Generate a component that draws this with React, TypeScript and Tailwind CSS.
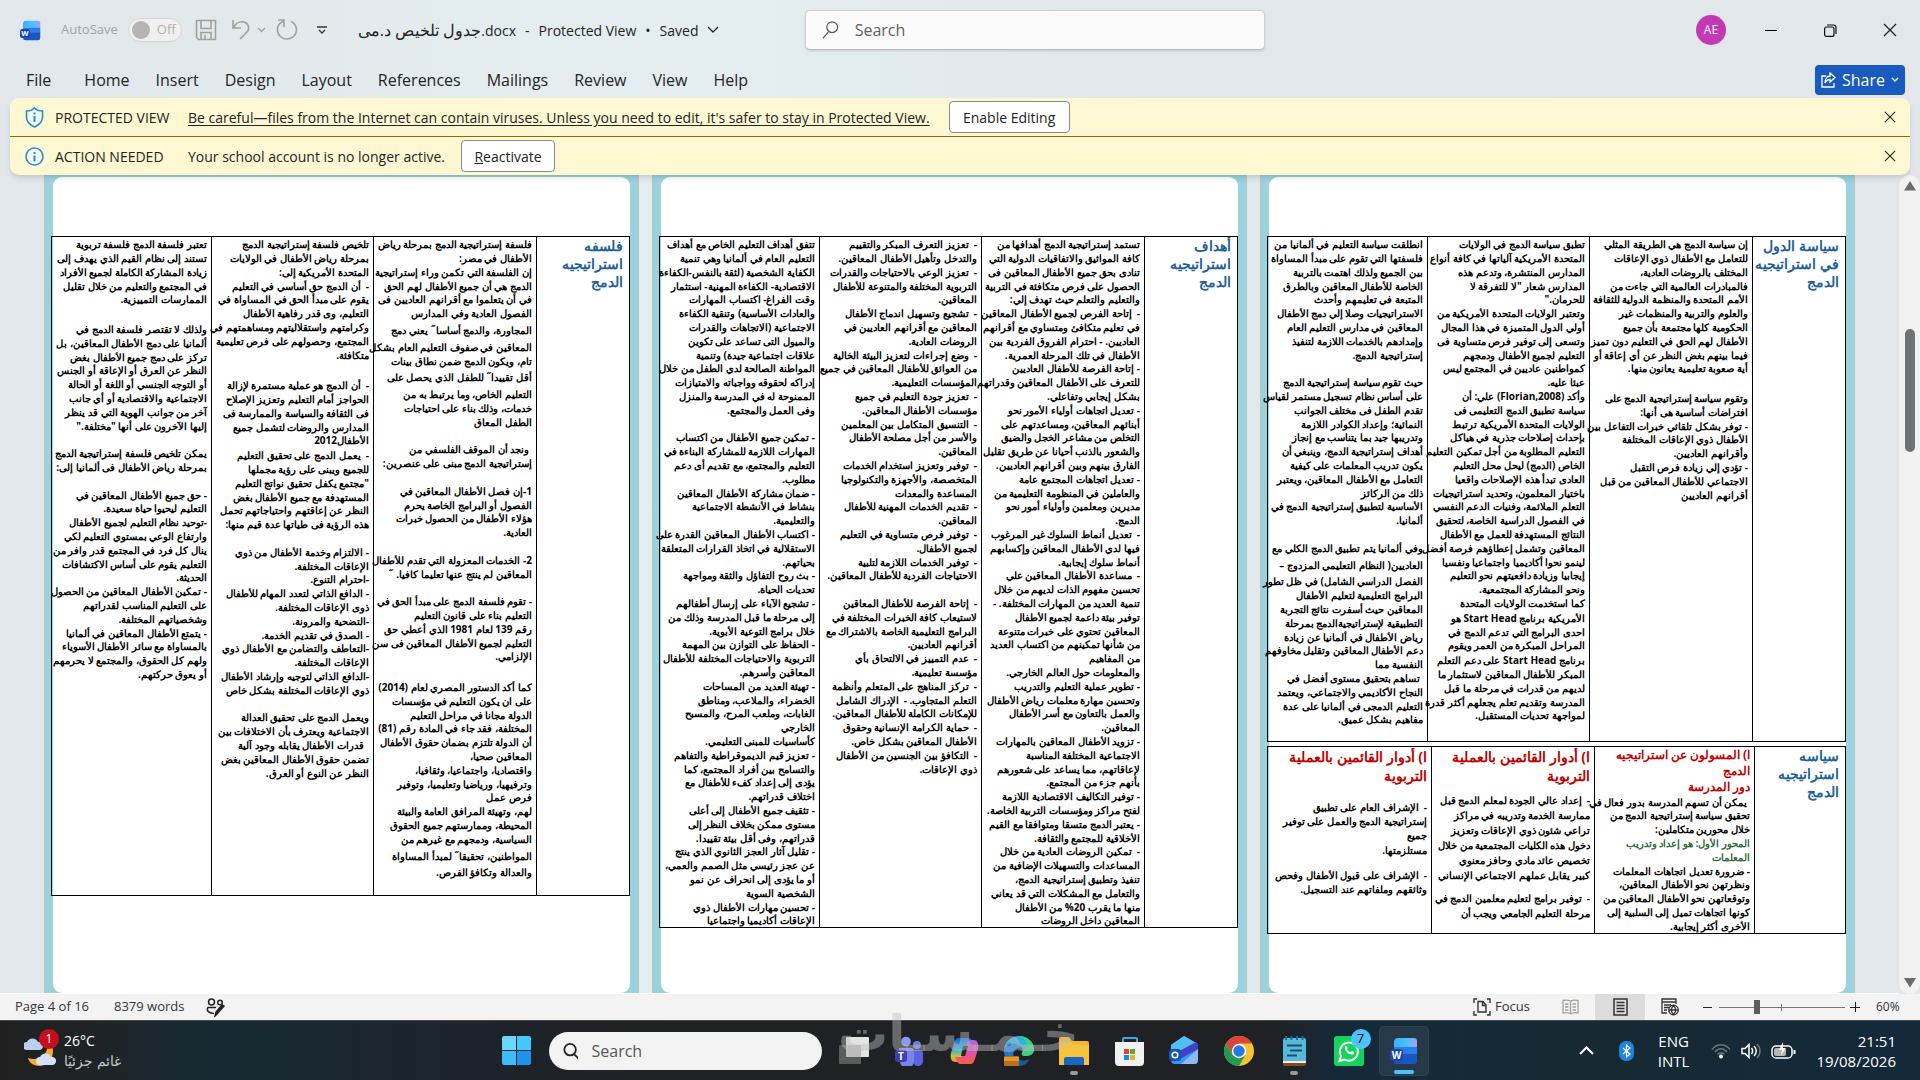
import React from "react";

type Line = string | [string, string];

const TALL = "pt-[3px]";
const RED = "text-[14px] leading-[19px]! text-[#c00000]";
const RED_SM = "text-[12px] leading-[16px]! text-[#c00000]";
const GREEN = "text-[#2f6b3c]";
const WIDE = "leading-[15px]!";
const GAP = "h-[8px]";

const philosophyHead = ["فلسفه", "استراتيجيه", "الدمج"];
const philosophyEgypt: Line[] = [
  "فلسفة إستراتيجية الدمج بمرحلة رياض",
  "الأطفال في مصر:",
  "إن الفلسفة التي تكمن وراء إستراتيجية",
  "الدمج هي أن جميع الأطفال لهم الحق",
  "في أن يتعلموا مع أقرانهم العاديين فى",
  "الفصول العادية وفي المدارس",
  ["المجاورة، والدمج أساسا˝ يعني دمج", TALL],
  ["المعاقين في صفوف التعليم العام بشكل", TALL],
  "تام، ويكون الدمج ضمن نطاق بينات",
  ["أقل تقييدا˝ للطفل الذي يحصل على", TALL],
  ["التعليم الخاص، وما يرتبط به من", TALL],
  "خدمات، وذلك بناء على احتياجات",
  "الطفل المعاق",
  "",
  "\u00a0ونجد أن الموقف الفلسفي من",
  "إستراتيجية الدمج مبنى على عنصرين:",
  "",
  "1-إن فصل الأطفال المعاقين في",
  "الفصول أو البرامج الخاصة يحرم",
  "هؤلاء الأطفال من الحصول خبرات",
  "العادية.",
  "",
  "2- الخدمات المعزولة التي تقدم للأطفال",
  "المعاقين لم ينتج عنها تعليما كافيا. ˝",
  "",
  "- تقوم فلسفة الدمج على مبدأ الحق في",
  "التعليم بناء على قانون التعليم",
  "رقم 139 لعام 1981 الذي أعطي حق",
  "التعليم لجميع الأطفال المعاقين فى سن",
  "الإلزامي.",
  "",
  ["كما أكد الدستور المصري لعام (2014)", TALL],
  "على ان يكون التعليم في مؤسسات",
  "الدولة مجانا في مراحل التعليم",
  "المختلفة، فقد جاء في المادة رقم (81)",
  "أن الدولة تلتزم بضمان حقوق الأطفال",
  "المعاقين صحيا،",
  "واقتصاديا، واجتماعيا، وثقافيا،",
  "وترفيهيا، ورياضيا وتعليميا، وتوفير",
  "فرص عمل",
  "لهم، وتهيئة المرافق العامة والبيئة",
  "المحيطة، وممارستهم جميع الحقوق",
  "السياسية، ودمجهم مع غيرهم من",
  ["المواطنين، تحقيقا˝ لمبدأ المساواة", TALL],
  ["والعدالة وتكافؤ الفرص.", TALL],
];
const philosophyUsa: Line[] = [
  "تلخيص فلسفة إستراتيجية الدمج",
  "بمرحلة رياض الأطفال في الولايات",
  "المتحدة الأمريكية إلى:",
  "-\u00a0 أن الدمج حق أساسي في التعليم",
  "يقوم على مبدأ الحق في المساواة في",
  "التعليم، وى قدر رفاهية الأطفال",
  "وكرامتهم واستقلاليتهم ومساهمتهم في",
  "المجتمع، وحصولهم على فرص تعليمية",
  "متكافئة.",
  "",
  ["-\u00a0 أن الدمج هو عملية مستمرة لإزالة", TALL],
  "الحواجز أمام التعليم وتعزيز الإصلاح",
  "فى الثقافة والسياسة والممارسة فى",
  "المدارس والروضات لتشمل جميع",
  "الأطفال2012",
  ["-\u00a0 يعمل الدمج على تحقيق التعليم", "pt-[1px]"],
  "للجميع ويبنى على رؤية مجملها",
  "\"مجتمع يكفل تحقيق نواتج التعليم",
  "المستهدفة مع جميع الأطفال بغض",
  "النظر عن إعاقتهم واحتياجاتهم تحمل",
  "هذه الرؤية فى طياتها عدة قيم منها:",
  "",
  "- الالتزام وخدمة الأطفال من ذوي",
  "الإعاقات المختلفة.",
  "-احترام التنوع.",
  "- الدافع الذاتي لتعدد المهام للأطفال",
  "ذوى الإعاقات المختلفة.",
  "-التضحية والمرونة.",
  "- الصدق في تقديم الخدمة.",
  "-التعاطف والتضامن مع الأطفال ذوي",
  "الإعاقات المختلفة.",
  "-الدافع الذاتي لتوجيه وإرشاد الأطفال",
  "ذوي الإعاقات المختلفة بشكل خاص",
  "",
  "ويعمل الدمج على تحقيق العدالة",
  "الاجتماعية ويعترف بأن الاختلافات بين",
  "\u00a0\u00a0قدرات الأطفال يقابله وجود آلية",
  "تضمن حقوق الأطفال المعاقين بغض",
  "النظر عن النوع أو العرق.",
];
const philosophyGermany: Line[] = [
  "تعتبر فلسفة الدمج فلسفة تربوية",
  "تستند إلى نظام القيم الذي يهدف إلى",
  "زيادة المشاركة الكاملة لجميع الأفراد",
  "في المجتمع والتعليم من خلال تقليل",
  "الممارسات التمييزية.",
  "",
  ["ولذلك لا تقتصر فلسفة الدمج في", "pt-[2px]"],
  "ألمانيا على دمج الأطفال المعاقين، بل",
  "تركز على دمج جميع الأطفال بغض",
  "النظر عن العرق أو الإعاقة أو الجنس",
  "أو التوجه الجنسي أو اللغة أو الحالة",
  "الاجتماعية والاقتصادية أو أي جانب",
  "آخر من جوانب الهوية التي قد ينظر",
  "إليها الآخرون على أنها \"مختلفة.\"",
  "",
  "يمكن تلخيص فلسفة إستراتيجية الدمج",
  "بمرحلة رياض الأطفال فى ألمانيا إلى:",
  "",
  "- حق جميع الأطفال المعاقين في",
  "التعليم ليحيوا حياة سعيدة.",
  "-توحيد نظام التعليم لجميع الأطفال",
  "وارتفاع الوعي بمستوي التعليم لكي",
  "ينال كل فرد في المجتمع قدر وافر من",
  "التعليم يقوم على أساس الاكتشافات",
  "الحديثة.",
  "- تمكين الأطفال المعاقين من الحصول",
  "على التعليم المناسب لقدراتهم",
  "وشخصياتهم المختلفة.",
  "- يتمتع الأطفال المعاقين في ألمانيا",
  "بالمساواة مع سائر الأطفال الأسوياء",
  "ولهم كل الحقوق، والمجتمع لا يحرمهم",
  "أو يعوق حركتهم.",
];

const goalsHead = ["أهداف", "استراتيجيه", "الدمج"];
const goalsEgypt: Line[] = [
  "تستمد إستراتيجية الدمج أهدافها من",
  "كافة المواثيق والاتفاقيات الدولية التي",
  "تنادى بحق جميع الأطفال المعاقين فى",
  "الحصول على فرص متكافئة في التربية",
  "والتعليم والتعلم حيث تهدف إلي:",
  "-\u00a0 إتاحة الفرص لجميع الأطفال المعاقين",
  "في تعليم متكافئ ومتساوي مع أقرانهم",
  "العاديين. - احترام الفروق الفردية بين",
  "الأطفال في تلك المرحلة العمرية.",
  "- إتاحة الفرصة للأطفال العاديين",
  "للتعرف على الأطفال المعاقين وقدراتهم",
  "بشكل إيجابي وتفاعلي.",
  "- تعديل اتجاهات أولياء الأمور نحو",
  "أبنائهم المعاقين، ومساعدتهم على",
  "التخلص من مشاعر الخجل والضيق",
  "والشعور بالذنب أحيانا عن طريق تقليل",
  "الفارق بينهم وبين أقرانهم العاديين.",
  "- تعديل اتجاهات المجتمع عامة",
  "والعاملين في المنظومة التعليمية من",
  "مديرين ومعلمين وأولياء أمور نحو",
  "الدمج.",
  "-\u00a0 تعديل أنماط السلوك غير المرغوب",
  "فيها لدي الأطفال المعاقين وإكسابهم",
  "أنماط سلوك إيجابية.",
  "-\u00a0 مساعدة الأطفال المعاقين علي",
  "تحسين مفهوم الذات لديهم من خلال",
  "تنمية العديد من المهارات المختلفة. -",
  "توفير بيئة داعمة لجميع الأطفال",
  "المعاقين تحتوي على خبرات متنوعة",
  "من شأنها تمكينهم من اكتساب العديد",
  "من المفاهيم",
  "والمعلومات حول العالم الخارجي.",
  "- تطوير عملية التعليم والتدريب",
  "وتحسين مهارة معلمات رياض الأطفال",
  "والعمل بالتعاون مع أسر الأطفال",
  "المعاقين.",
  "- تزويد الأطفال المعاقين بالمهارات",
  "الاجتماعية المختلفة المناسبة",
  "لإعاقاتهم، مما يساعد على شعورهم",
  "بأنهم جزء من المجتمع.",
  "- توفير التكاليف الاقتصادية اللازمة",
  "لفتح مراكز ومؤسسات التربية الخاصة.",
  "- يعتبر الدمج متسقا ومتوافقا مع القيم",
  "الأخلاقية للمجتمع والثقافة.",
  "-\u00a0 تمكين الروضات العادية من خلال",
  "المساعدات والتسهيلات الإضافية من",
  "تنفيذ وتطبيق إستراتيجية الدمج،",
  "والتعامل مع المشكلات التي قد يعاني",
  "منها ما يقرب 20% من الأطفال",
  "المعاقين داخل الروضات",
];
const goalsUsa: Line[] = [
  "-\u00a0 تعزيز التعرف المبكر والتقييم",
  "والتدخل وتأهيل الأطفال المعاقين.",
  "-\u00a0 تعزيز الوعي بالاحتياجات والقدرات",
  "التربوية المختلفة والمتنوعة للأطفال",
  "المعاقين.",
  "-\u00a0 تشجيع وتسهيل اندماج الأطفال",
  "المعاقين مع أقرانهم العاديين في",
  "الروضات العادية.",
  "-\u00a0 وضع إجراءات لتعزيز البيئة الخالية",
  "من العوائق للأطفال المعاقين في جميع",
  "المؤسسات التعليمية.",
  "-\u00a0 تعزيز جودة التعليم في جميع",
  "مؤسسات الأطفال المعاقين.",
  "-\u00a0 التنسيق المتكامل بين المعلمين",
  "والأسر من أجل مصلحة الأطفال",
  "المعاقين.",
  "-\u00a0 توفير وتعزيز استخدام الخدمات",
  "المتخصصة، والأجهزة والتكنولوجيا",
  "المساعدة والمعدات",
  "-\u00a0 تقديم الخدمات المهنية للأطفال",
  "المعاقين.",
  "-\u00a0 توفير فرص متساوية في التعليم",
  "لجميع الأطفال.",
  "-\u00a0 توفير الخدمات اللازمة لتلبية",
  "الاحتياجات الفردية للأطفال المعاقين.",
  "",
  "-\u00a0 إتاحة الفرصة للأطفال المعاقين",
  "لاستيعاب كافة الخبرات المختلفة في",
  "البرامج التعليمية الخاصة بالاشتراك مع",
  "أقرانهم العاديين.",
  "-\u00a0 عدم التمييز في الالتحاق بأي",
  "مؤسسة تعليمية.",
  "-\u00a0 تركز المناهج على المتعلم وأنظمة",
  "التعلم المتجاوب. -\u00a0 الإدراك الشامل",
  "للإمكانات الكاملة للأطفال المعاقين.",
  "-\u00a0 حماية الكرامة الإنسانية وحقوق",
  "الأطفال المعاقين بشكل خاص.",
  "-\u00a0 التكافؤ بين الجنسين من الأطفال",
  "ذوي الإعاقات.",
];
const goalsGermany: Line[] = [
  "تتفق أهداف التعليم الخاص مع أهداف",
  "التعليم العام في ألمانيا وهي تنمية",
  "الكفاية الشخصية (لثقة بالنفس-الكفاءة",
  "الاقتصادية- الكفاءة المهنية- استثمار",
  "وقت الفراغ- اكتساب المهارات",
  "والعادات الأساسية) وتنقية الكفاءة",
  "الاجتماعية (الاتجاهات والقدرات",
  "والميول التى تساعد على تكوين",
  "علاقات اجتماعية جيدة) وتنمية",
  "المواطنة الصالحة لدي الطفل من خلال",
  "إدراكه لحقوقه وواجباته والامتيازات",
  "الممنوحة له في المدرسة والمنزل",
  "وفى العمل والمجتمع.",
  "",
  "- تمكين جميع الأطفال من اكتساب",
  "المهارات اللازمة للمشاركة البناءة في",
  "التعليم والمجتمع، مع تقديم أى دعم",
  "مطلوب.",
  "- ضمان مشاركة الأطفال المعاقين",
  "بنشاط في الأنشطة الاجتماعية",
  "والتعليمية.",
  "- اكتساب الأطفال المعاقين القدرة على",
  "الاستقلالية في اتخاذ القرارات المتعلقة",
  "بحياتهم.",
  "- بث روح التفاؤل والثقة ومواجهة",
  "تحديات الحياة.",
  "- تشجيع الآباء على إرسال أطفالهم",
  "إلى مرحلة ما قبل المدرسة وذلك من",
  "خلال برامج التوعية الأبوية.",
  "- الحفاظ على التوازن بين المهمة",
  "التربوية والاحتياجات المختلفة للأطفال",
  "المعاقين وأسرهم.",
  "- تهيئة العديد من المساحات",
  "الخضراء، والملاعب، ومناطق",
  "الغابات، وملعب المرح، والمسبح",
  "الخارجي",
  "كأساسيات للمبنى التعليمي.",
  "- تعزيز قيم الديموقراطية والتفاهم",
  "والتسامح بين أفراد المجتمع، كما",
  "يؤدى إلى إعداد كفء للأطفال مع",
  "اختلاف قدراتهم.",
  "- تثقيف جميع الأطفال إلى أعلى",
  "مستوى ممكن بخلاف النظر إلى",
  "قدراتهم، وفى أقل بيئة تقييدا.",
  "- تقليل آثار العجز الثانوي الذي ينتج",
  "عن عجز رئيسي مثل الصمم والعمي،",
  "أو ما يؤدى إلى انحراف عن نمو",
  "الشخصية السوية",
  "- تحسين مهارات الأطفال ذوي",
  "الإعاقات أكاديميا واجتماعيا",
];

const policyHead = ["سياسة الدول", "في استراتيجيه", "الدمج"];
const policyEgypt: Line[] = [
  "إن سياسة الدمج هي الطريقة المثلي",
  "للتعامل مع الأطفال ذوي الإعاقات",
  "المختلف بالروضات العادية،",
  "فالمبادرات العالمية التي جاءت من",
  "الأمم المتحدة والمنظمة الدولية للثقافة",
  "والعلوم والتربية والمنظمات غير",
  "الحكومية كلها مجتمعة بأن جميع",
  "الأطفال لهم الحق في التعليم دون تميز",
  "فيما بينهم بغض النظر عن أي إعاقة أو",
  "أية صعوبة تعليمية يعانون منها.",
  "",
  ["وتقوم سياسة إستراتيجية الدمج على", "pt-[2px]"],
  "افتراضات أساسية هى أنها:",
  "- توفر بشكل تلقائي خبرات التفاعل بين",
  "الأطفال ذوي الإعاقات المختلفة",
  "وأقرانهم العاديين.",
  "- تؤدي إلي زيادة فرص التقبل",
  "الاجتماعي للأطفال المعاقين من قبل",
  "أقرانهم العاديين",
];
const policyUsa: Line[] = [
  "تطبق سياسة الدمج في الولايات",
  "المتحدة الأمريكية آلياتها في كافة أنواع",
  "المدارس المنتشرة، وتدعم هذه",
  "المدارس شعار \"لا للتفرقة لا",
  "للحرمان.\"",
  "وتعتبر الولايات المتحدة الأمريكية من",
  "أولي الدول المتميزة في هذا المجال",
  "وتسعى إلى توفير فرص متساوية فى",
  "التعليم لجميع الأطفال ودمجهم",
  "كمواطنين عاديين في المجتمع ليس",
  "عبئا عليه.",
  "وأكد (Florian,2008) علي: أن",
  "سياسة تطبيق الدمج التعليمى فى",
  "الولايات المتحدة الأمريكية ترتبط",
  "بإحداث إصلاحات جذرية في هياكل",
  "التعليم المطلوبة من أجل تمكين التعليم",
  "الخاص (الدمج) ليحل محل التعليم",
  "العادى تبدأ هذه الإصلاحات واقعيا",
  "باختيار المعلمون، وتحديد استراتيجيات",
  "التعلم الملائمة، وفنيات الدعم النفسي",
  "في الفصول الدراسية الخاصة، لتحقيق",
  "النتائج المستهدفة للعمل مع الأطفال",
  "المعاقين وتشمل إعطاؤهم فرصة أفضل",
  "لينمو نحوا أكاديميا واجتماعيا ونفسيا",
  "إيجابيا وزيادة دافعيتهم نحو التعليم",
  "ونحو المشاركة المجتمعية.",
  "كما استخدمت الولايات المتحدة",
  ["الأمريكية برنامج Start Head هو", "pt-[1px]"],
  "احدى البرامج التي تدعم الدمج في",
  "المراحل المبكرة من العمر ويقوم",
  ["برنامج Start Head على دعم التعلم", "pt-[1px]"],
  "المبكر للأطفال المعاقين لاستثمار ما",
  "لديهم من قدرات في مرحلة ما قبل",
  "المدرسة وتقديم تعلم يجعلهم أكثر قدرة",
  "لمواجهة تحديات المستقبل.",
];
const policyGermany: Line[] = [
  "انطلقت سياسة التعليم في ألمانيا من",
  "فلسفتها التي تقوم على مبدأ المساواة",
  "بين الجميع ولذلك اهتمت بالتربية",
  "الخاصة للأطفال المعاقين وبالطرق",
  "المتبعة في تعليمهم وأحدث",
  "الاستراتيجيات وصلا إلي دمج الأطفال",
  "المعاقين في مدارس التعليم العام",
  "وإمدادهم بالخدمات اللازمة لتنفيذ",
  "إستراتيجية الدمج.",
  "",
  "حيث تقوم سياسة إستراتيجية الدمج",
  "على أساس نظام تسجيل مستمر لقياس",
  "تقدم الطفل فى مختلف الجوانب",
  "النمائية؛ وإعداد الكوادر اللازمة",
  "وتدريبها جيد بما يتناسب مع إنجاز",
  "أهداف إستراتيجية الدمج، وينبغي أن",
  "يكون تدريب المعلمات على كيفية",
  "التعامل مع الأطفال المعاقين، ويعتبر",
  "ذلك من الركائز",
  "الأساسية لتطبيق إستراتيجية الدمج في",
  "ألمانيا.",
  "",
  "وفي ألمانيا يتم تطبيق الدمج الكلي مع",
  ["العاديين( النظام التعليمي المزدوج –", TALL],
  ["الفصل الدراسي الشامل) في ظل تطور", TALL],
  "البرامج التعليمية لتعليم الأطفال",
  "المعاقين حيث أسفرت نتائج التجربة",
  "التطبيقية لإستراتيجيةالدمج بمرحلة",
  "رياض الأطفال في ألمانيا عن زيادة",
  "دعم الأطفال المعاقين وتقليل مخاوفهم",
  "النفسية مما",
  "\u00a0تساهم بتحقيق مستوى أفضل في",
  "النجاح الأكاديمي والاجتماعي، ويعتمد",
  "التعليم الدمجى في ألمانيا على عدة",
  "مفاهيم بشكل عميق.",
];

const rolesHead = ["سياسه", "استراتيجيه", "الدمج"];
const rolesEgypt: Line[] = [
  ["ا) المسولون عن استراتيجيه", RED_SM],
  ["الدمج", RED_SM],
  ["دور المدرسة", RED_SM],
  "\u00a0يمكن أن تسهم المدرسة بدور فعال في",
  "تحقيق سياسة إستراتيجية الدمج من",
  "خلال محورين متكاملين:",
  ["المحور الأول: هو إعداد وتدريب", GREEN],
  ["المعلمات", GREEN],
  "- ضرورة تعديل اتجاهات المعلمات",
  "ونظرتهن نحو الأطفال المعاقين،",
  "وتوقعاتهن نحو الأطفال المعاقين من",
  "كونها اتجاهات تميل إلى السلبية إلى",
  "الأخرى أكثر إيجابية.",
];
const rolesUsa: Line[] = [
  ["ا) أدوار القائمين بالعملية", RED],
  ["التربوية", RED],
  ["", GAP],
  ["-\u00a0 إعداد عالي الجودة لمعلم الدمج قبل", WIDE],
  ["ممارسة الخدمة وتدريبه في مراكز", WIDE],
  ["تراعي شئون ذوي الإعاقات وتعزيز", WIDE],
  ["دخول هذه الكليات المجتمعية من خلال", WIDE],
  ["تخصيص عائد مادي وحافز معنوي", WIDE],
  ["كبير يقابل عملهم الاجتماعي الإنساني", WIDE],
  ["", GAP],
  ["-\u00a0 توفير برامج لتعليم معلمين الدمج في", WIDE],
  ["مرحلة التعليم الجامعي ويجب أن", WIDE],
];
const rolesGermany: Line[] = [
  ["ا) أدوار القائمين بالعملية", RED],
  ["التربوية", RED],
  ["", WIDE],
  ["-\u00a0 الإشراف العام على تطبيق", WIDE],
  "إستراتيجية الدمج والعمل على توفير",
  ["جميع", WIDE],
  "مستلزمتها.",
  ["", GAP],
  ["", "h-[4px]"],
  "-\u00a0 الإشراف على قبول الأطفال وفحص",
  "وثائقهم وملفاتهم عند التسجيل.",
];

function Cell({ lines }: { lines: Line[] }) {
  return (
    <td className="border border-black p-0 pr-[4px] align-top">
      <div className="text-[10px] font-bold text-black [&>p]:leading-[14px] [&>p:nth-child(5n)]:leading-[13px]">
        {lines.map((l, i) => {
          const [text, cls] = typeof l === "string" ? [l, ""] : l;
          return (
            <p key={i} className={"whitespace-nowrap " + cls}>
              {text || (cls.startsWith("h-") ? "" : "\u00a0")}
            </p>
          );
        })}
      </div>
    </td>
  );
}

function Head({ lines }: { lines: string[] }) {
  return (
    <th scope="row" className="border border-black p-0 pr-[6px] text-right align-top text-[14px] leading-[18px] font-bold whitespace-nowrap text-[#1f6299]">
      {lines.map((l) => (
        <div key={l}>{l}</div>
      ))}
    </th>
  );
}

function Grid({ head, cells, widths, height }: { head: string[]; cells: Line[][]; widths: string[]; height: string }) {
  return (
    <table dir="rtl" className={"w-[578px] table-fixed border-collapse " + height}>
      <colgroup>
        {widths.map((w, i) => (
          <col key={i} className={w} />
        ))}
      </colgroup>
      <tbody>
        <tr>
          <Head lines={head} />
          {cells.map((c, i) => (
            <Cell key={i} lines={c} />
          ))}
        </tr>
      </tbody>
    </table>
  );
}

function Page({ children }: { children: React.ReactNode }) {
  return (
    <article className="w-[595px] shrink-0 border-x border-[#b9c4c8] bg-[#9bd3dd] px-[8px] pt-[2px]">
      <div dir="rtl" className="h-full rounded-[9px] bg-white pt-[59px]">
        {children}
      </div>
    </article>
  );
}

const mainCols = ["w-[93px]", "w-[163px]", "w-[162px]", "w-[160px]"];
const roleCols = ["w-[91px]", "w-[160px]", "w-[163px]", "w-[164px]"];

function CloseX({ size = 14 }: { size?: number }) {
  return (
    <svg width={size} height={size} viewBox="0 0 14 14" stroke="#262626" strokeWidth="1.3" fill="none" aria-hidden>
      <path d="M1 1l12 12M13 1L1 13" />
    </svg>
  );
}

function WordLogo({ size }: { size: number }) {
  return (
    <svg width={size} height={size} viewBox="0 0 28 28" aria-hidden>
      <defs>
        <linearGradient id="wt" x1="0" x2="1">
          <stop offset="0" stopColor="#39b0f8" />
          <stop offset="0.6" stopColor="#4cc2ff" />
          <stop offset="1" stopColor="#a79cf0" />
        </linearGradient>
      </defs>
      <path d="M8 1h16a3 3 0 0 1 3 3v6H4V5a4 4 0 0 1 4-4z" fill="url(#wt)" />
      <path d="M4 10h23v8H4z" fill="#2b7de9" />
      <path d="M4 17h23v7a3 3 0 0 1-3 3H7a3 3 0 0 1-3-3z" fill="#1a56c4" />
      <rect x="0" y="12" width="13" height="12" rx="3" fill="#1747b0" />
      <text x="6.5" y="21.5" textAnchor="middle" fontSize="10" fontWeight="700" fill="#fff" fontFamily="Open Sans">W</text>
    </svg>
  );
}

function TitleBar() {
  return (
    <header className="flex h-[60px] items-center">
      <div className="flex flex-1 items-center pl-5">
        <WordLogo size={21} />
        <label className="ml-[20px] flex items-center gap-[10px] text-[13px] text-[#a0a5a8]">
          AutoSave
          <button role="switch" aria-checked="false" aria-label="AutoSave" className="flex h-[24px] w-[54px] items-center gap-[7px] rounded-full border border-[#d6d6d6] bg-[#f0f0f0] pl-[3px] text-[#b0b0b0]">
            <span className="size-[18px] rounded-full bg-[#b4b4b4]" />
            Off
          </button>
        </label>
        <button aria-label="Save" className="ml-[13px]">
          <svg width="22" height="22" viewBox="0 0 22 22" fill="none" stroke="#a0a19c" strokeWidth="1.6" aria-hidden>
            <path d="M1.5 1.5h19v19h-17l-2-2zM6 1.5v8h10v-8M6 20.5v-7h10v7M10 16v4" />
          </svg>
        </button>
        <button aria-label="Undo" className="ml-[14px] flex items-center gap-1">
          <svg width="22" height="22" viewBox="0 0 22 22" fill="none" stroke="#a0a19c" strokeWidth="1.6" aria-hidden>
            <path d="M2 1v8h8M2.500 8.500C5 4 9 2 13 3c5 1.500 6 7 3 10l-7 7" />
          </svg>
          <svg width="9" height="6" viewBox="0 0 9 6" fill="none" stroke="#a0a19c" strokeWidth="1.400" aria-hidden><path d="M1 1l3.500 3.500L8 1" /></svg>
        </button>
        <button aria-label="Redo" className="ml-[10px]">
          <svg width="22" height="22" viewBox="0 0 22 22" fill="none" stroke="#a0a19c" strokeWidth="1.600" aria-hidden>
            <path d="M2 1h6v7M8 2C3 4 1 8 1.500 12c1 5 5 8 9.500 8 5 0 9.500-4 9.500-9 0-4-2-7-5.500-8.500" />
          </svg>
        </button>
        <button aria-label="Customize Quick Access Toolbar" className="ml-[19px]">
          <svg width="10" height="9" viewBox="0 0 10 9" fill="none" stroke="#333" strokeWidth="1.300" aria-hidden><path d="M0 1h10M2 4l3 3 3-3" /></svg>
        </button>
        <button className="ml-[31px] flex items-center gap-[9px] text-[14px] whitespace-nowrap text-[#242424]">
          <span><bdi className="text-[16px]">جدول تلخيص د.مى</bdi>.docx</span>
          <span>-</span>
          <span>Protected View</span>
          <span>•</span>
          <span>Saved</span>
          <svg width="12" height="8" viewBox="0 0 12 8" fill="none" stroke="#242424" strokeWidth="1.300" aria-hidden><path d="M1 1l5 5 5-5" /></svg>
        </button>
      </div>
      <label className="flex h-[40px] w-[460px] items-center gap-4 rounded-[5px] border border-[#cdd1d3] border-b-[#b8bcbe] bg-[#fafafa] pl-[16px] shadow-sm">
        <svg width="18" height="20" viewBox="0 0 18 20" fill="none" stroke="#555" strokeWidth="1.300" aria-hidden><circle cx="11" cy="7" r="5.800" /><path d="M7 12l-6 7" /></svg>
        <input aria-label="Search" placeholder="Search" className="w-full bg-transparent text-[16px] outline-none placeholder:text-[#616161]" />
      </label>
      <div className="flex w-[655px] items-center justify-end pr-[23px]">
        <button className="mr-[39px] size-[30px] rounded-full bg-[#c239b3] text-[12px] text-white">AE</button>
        <button aria-label="Minimize" className="mr-[47px]"><span className="block h-px w-[12px] bg-black" /></button>
        <button aria-label="Restore" className="mr-[46px]">
          <svg width="13" height="13" viewBox="0 0 13 13" fill="none" stroke="#111" strokeWidth="1.200" aria-hidden><rect x="0.600" y="3" width="9.400" height="9.400" rx="2" /><path d="M3 1h6.500a2.500 2.500 0 0 1 2.500 2.500V10" /></svg>
        </button>
        <button aria-label="Close"><CloseX /></button>
      </div>
    </header>
  );
}

const tabs = ["Home", "Insert", "Design", "Layout", "References", "Mailings", "Review", "View", "Help"];

function Menu() {
  return (
    <nav className="flex h-[38px] items-center pt-px pr-[15px] pl-[26px] text-[16px] text-[#242424]">
      <button className="mr-[33px]">File</button>
      <div className="flex flex-1 gap-[26px]">
        {tabs.map((t) => (
          <button key={t}>{t}</button>
        ))}
      </div>
      <button className="flex h-[30px] w-[90px] items-center gap-[6px] rounded-[4px] bg-[#185abd] pl-[6px] text-white">
        <svg width="15" height="16" viewBox="0 0 15 16" fill="none" stroke="#fff" strokeWidth="1.300" aria-hidden>
          <path d="M5 4H1v11h12v-4M9 1l5 4.500L9 10V7.500C6.500 7.500 5 8.500 4 11c0-4 2-7 5-7z" />
        </svg>
        Share
        <svg width="8" height="6" viewBox="0 0 8 6" fill="none" stroke="#fff" strokeWidth="1.400" aria-hidden><path d="M1 1l3 3 3-3" /></svg>
      </button>
    </nav>
  );
}

function InfoBars() {
  return (
    <section className="relative z-10 mr-[10px] ml-[10px] rounded-[9px] bg-[#fdf8d2] text-[14px] text-[#242424] shadow-md">
      <div className="flex h-[39px] items-center border-b border-[#8d6b00] pr-[14px] pl-[15px]">
        <svg width="19" height="21" viewBox="0 0 19 21" fill="#f3fafe" stroke="#2a8dd4" strokeWidth="1.600" aria-hidden>
          <path d="M9.500 1C7.500 3 4.500 4 1.500 4v6c0 5 3.500 8 8 10 4.500-2 8-5 8-10V4c-3 0-6-1-8-3z" /><path d="M9.500 9v6M9.500 5.500v2" strokeWidth="2" />
        </svg>
        <strong className="ml-[11px] w-[133px] font-medium">PROTECTED VIEW</strong>
        <a href="#protected" className="mr-[19px] underline underline-offset-2">
          Be careful—files from the Internet can contain viruses. Unless you need to edit, it's safer to stay in Protected View.
        </a>
        <button className="h-[32px] w-[121px] rounded-[4px] border border-[#8a8a8a] bg-white">Enable Editing</button>
        <button aria-label="Close message" className="ml-auto"><CloseX size={12} /></button>
      </div>
      <div className="flex h-[38px] items-center pr-[14px] pl-[15px]">
        <svg width="19" height="21" viewBox="0 0 19 21" fill="#f3fafe" stroke="#2a8dd4" strokeWidth="1.600" aria-hidden>
          <circle cx="9.500" cy="10.500" r="8.500" /><path d="M9.500 9.500v6M9.500 6v2" strokeWidth="2" />
        </svg>
        <strong className="ml-[11px] w-[133px] font-medium">ACTION NEEDED</strong>
        <span className="mr-[16px]">Your school account is no longer active.</span>
        <button className="h-[32px] w-[94px] rounded-[4px] border border-[#8a8a8a] bg-white"><u>R</u>eactivate</button>
        <button aria-label="Close message" className="ml-auto"><CloseX size={12} /></button>
      </div>
    </section>
  );
}

function StatusBar() {
  return (
    <footer className="flex h-[26px] shrink-0 items-center bg-[#f3f3f3] pr-[18px] pl-[15px] text-[13px] text-[#333]">
      <span className="w-[99px]">Page 4 of 16</span>
      <span className="w-[92px]">8379 words</span>
      <svg width="20" height="19" viewBox="0 0 20 19" fill="none" stroke="#222" strokeWidth="1.500" aria-hidden>
        <circle cx="5.500" cy="4" r="3" /><circle cx="14" cy="4.500" r="2.300" /><path d="M10 9.500H2c-2 3 1 6 6 6" /><path d="M18 8l-7 8-2 2 1-4 6-7z" fill="#222" />
      </svg>
      <div className="ml-auto flex items-center">
        <button className="flex items-center gap-[4px]">
          <svg width="18" height="18" viewBox="0 0 18 18" fill="none" stroke="#333" strokeWidth="1.400" aria-hidden>
            <path d="M1 5V1h3M14 1h3v4M17 13v4h-3M4 17H1v-4M5 3.500h5l3 3.500v7H5zM9.500 3.500V7.500H13" />
          </svg>
          Focus
        </button>
        <button aria-label="Read Mode" className="ml-[32px]">
          <svg width="17" height="16" viewBox="0 0 17 16" fill="none" stroke="#a3a39c" strokeWidth="1.300" aria-hidden>
            <path d="M8.500 2C6.500 1 3 1 1 1.500V14c2-.500 5.500-.500 7.500 1 2-1.500 5.500-1.500 7.500-1V1.500C14 1 10.500 1 8.500 2zV15M3 5h3.500M3 8h3.500M3 11h3.500M10.500 5H14M10.500 8H14M10.500 11H14" />
          </svg>
        </button>
        <button aria-label="Print Layout" className="ml-[16px] grid h-[26px] w-[50px] place-items-center bg-[#dcdcdc]">
          <svg width="15" height="18" viewBox="0 0 15 18" fill="none" stroke="#333" strokeWidth="1.500" aria-hidden>
            <path d="M1 1h13v16H1zM3.500 4.500h8M3.500 7.500h8M3.500 10.500h8M3.500 13.500h8" />
          </svg>
        </button>
        <button aria-label="Web Layout" className="ml-[16px]">
          <svg width="18" height="18" viewBox="0 0 18 18" fill="none" stroke="#333" strokeWidth="1.300" aria-hidden>
            <path d="M6 15H1V1h14v5M1 4h14M3 7h7M3 9.500h5M3 12h3" /><circle cx="12.500" cy="12" r="4.800" /><path d="M8 12h9M12.500 7.500c-3 3-3 6 0 9 3-3 3-6 0-9z" />
          </svg>
        </button>
        <button aria-label="Zoom out" className="ml-[24px]"><span className="block h-px w-[9px] bg-[#222]" /></button>
        <div className="relative ml-[7px] flex w-[126px] items-center">
          <span className="absolute left-[62px] h-[7px] w-px bg-[#777]" />
          <input
            type="range"
            aria-label="Zoom"
            defaultValue={29}
            className="relative h-[14px] w-full appearance-none bg-transparent [&::-webkit-slider-runnable-track]:h-px [&::-webkit-slider-runnable-track]:bg-[#777] [&::-webkit-slider-thumb]:mt-[-7px] [&::-webkit-slider-thumb]:h-[14px] [&::-webkit-slider-thumb]:w-[6px] [&::-webkit-slider-thumb]:appearance-none [&::-webkit-slider-thumb]:bg-[#5c5c5c]"
          />
        </div>
        <button aria-label="Zoom in" className="ml-[5px]">
          <svg width="10" height="10" viewBox="0 0 10 10" stroke="#222" aria-hidden><path d="M0 5.500h10M5.500 0v10" /></svg>
        </button>
        <span className="ml-[16px] w-[26px] text-[12px]">60%</span>
      </div>
    </footer>
  );
}

function AppButton({ label, dot, children }: { label: string; dot?: boolean; children: React.ReactNode }) {
  return (
    <button aria-label={label} className="relative grid h-[60px] w-[55px] place-items-center">
      {children}
      {dot && <span className="absolute bottom-[6px] h-[4px] w-[8px] rounded-full bg-[#9b9b93]" />}
    </button>
  );
}

function Taskbar() {
  return (
    <div className="relative flex h-[60px] shrink-0 items-center border-t border-[#44494c] bg-[linear-gradient(90deg,#202020_0%,#1f2224_4%,#172a33_11%,#18272f_16%,#1c242d_22%,#202124_35%,#202124_66%,#14293a_70%,#172a33_82%,#14293a_100%)] text-white">
      <div className="flex flex-1 items-center pl-[24px]">
        <button className="flex items-center gap-[5px] text-left">
          <span className="relative">
            <svg width="35" height="38" viewBox="0 0 35 38" aria-hidden>
              <path d="M28 14c3 8-1 19-12 20-6 0-11-3-12-8 9 3 18-1 20-12z" fill="#f3b02f" />
              <path d="M3 18a4 4 0 0 1 0-8 6 6 0 0 1 11 0 4 4 0 0 1 2 8z" fill="#b9d0f2" />
              <path d="M16 33a4 4 0 0 1 0-8 6 6 0 0 1 11 0 4 4 0 0 1 2 8z" fill="#d3e2f8" />
            </svg>
            <span className="absolute -top-[3px] left-[15px] grid size-[20px] place-items-center rounded-full bg-[#c50f1f] text-[12px]">1</span>
          </span>
          <span className="text-[14px] leading-[20px]">
            <span className="block">26°C</span>
            <span className="block text-[#c4c9cb]" dir="rtl">غائم جزئيًا</span>
          </span>
        </button>
      </div>
      <div className="ml-[3px] flex items-center">
        <button aria-label="Start" className="grid h-[60px] w-[44px] place-items-center">
          <span className="grid grid-cols-2 gap-px">
            <span className="size-[14px] rounded-tl-[2px] bg-[#6ad8fb]" />
            <span className="size-[14px] rounded-tr-[2px] bg-[#43c8fb]" />
            <span className="size-[14px] rounded-bl-[2px] bg-[#3cbcfb]" />
            <span className="size-[14px] rounded-br-[2px] bg-[#1c93ee]" />
          </span>
        </button>
        <label className="mr-[5px] ml-[10px] flex h-[38px] w-[273px] items-center gap-[13px] rounded-full bg-[#f3f3f3] pl-[14px]">
          <svg width="18" height="18" viewBox="0 0 18 18" fill="none" stroke="#222" strokeWidth="2" aria-hidden><circle cx="8" cy="7.500" r="6.500" /><path d="M12.500 12.500l5 5" /></svg>
          <input aria-label="Search Windows" placeholder="Search" className="w-full bg-transparent text-[16px] text-black outline-none placeholder:text-[#555]" />
        </label>
        <AppButton label="Task View">
          <svg width="30" height="28" viewBox="0 0 30 28" aria-hidden><rect y="8" width="22" height="19" rx="1" fill="#5c5c5c" /><rect x="7" width="23" height="20" rx="1" fill="#e4e4e4" /><rect x="7" y="8" width="15" height="12" fill="#bcbcbc" /></svg>
        </AppButton>
        <AppButton label="Teams">
          <svg width="28" height="30" viewBox="0 0 28 30" aria-hidden>
            <circle cx="22" cy="9" r="4" fill="#6f7bea" /><path d="M18 14h7a3 3 0 0 1 3 3v7a5 5 0 0 1-10 2z" fill="#5b62e0" />
            <circle cx="11" cy="5.500" r="4.800" fill="#8b9bf5" /><path d="M4 12h13a3 3 0 0 1 2 3v9a7 7 0 0 1-14 2z" fill="#7b83eb" />
            <rect y="14" width="12" height="12" rx="3" fill="#3c3fb8" /><text x="6" y="23.500" textAnchor="middle" fontSize="10" fontWeight="700" fill="#fff" fontFamily="Open Sans">T</text>
          </svg>
        </AppButton>
        <AppButton label="Copilot">
          <svg width="29" height="26" viewBox="0 0 29 26" aria-hidden>
            <defs>
              <linearGradient id="cpA" x1="0" y1="0" x2="0" y2="1"><stop offset="0" stopColor="#1668d8" /><stop offset="0.5" stopColor="#2fb4d8" /><stop offset="0.75" stopColor="#c8c040" /><stop offset="1" stopColor="#f0a030" /></linearGradient>
              <linearGradient id="cpB" x1="0" y1="0" x2="0" y2="1"><stop offset="0" stopColor="#a86ae0" /><stop offset="0.5" stopColor="#e04fb0" /><stop offset="1" stopColor="#f4623c" /></linearGradient>
            </defs>
            <path d="M9 0h9c3 0 4 2 5 5l1 2h-5c-2 0-3 1-4 4l-3 9c-1 3-2 4-4 4H6c-5 0-6-4-5-9l3-10c1-3 2-5 5-5z" fill="url(#cpA)" />
            <path d="M20 26h-9c-3 0-4-2-5-5l-1-2h5c2 0 3-1 4-4l3-9c1-3 2-4 4-4h2c5 0 6 4 5 9l-3 10c-1 3-2 5-5 5z" fill="url(#cpB)" />
            <path d="M13 8h5l-3 10h-4z" fill="#24262a" />
          </svg>
        </AppButton>
        <AppButton label="Edge">
          <svg width="30" height="30" viewBox="0 0 30 30" aria-hidden>
            <path d="M0 15C0 6 7 0 15 0s15 6 15 13c0 5-4 7-8 7-3 0-5-1-4-3 2-3 0-7-4-7-6 0-9 5-9 12z" fill="#2bb3e0" />
            <path d="M15 0c8 0 15 6 15 13 0 5-4 7-8 7-3 0-5-1-4-3 1-1 1-3 0-4 3 1 6-1 5-5s-4-7-8-8z" fill="#3fd07f" />
            <path d="M0 15c1-6 6-8 11-7 4 1 7 4 7 6-2-3-6-2-8 1-2 4 0 10 5 15C7 30 0 23 0 15z" fill="#1a78d0" />
            <path d="M12 19c1 5 7 7 14 4-3 5-7 7-11 7-2-2-4-6-3-11z" fill="#145a94" />
            <rect y="20" width="15" height="10" rx="1" fill="#b8701c" /><path d="M0 21h15v4H0z" fill="#e09a2c" />
          </svg>
        </AppButton>
        <AppButton label="File Explorer" dot>
          <svg width="30" height="28" viewBox="0 0 30 28" aria-hidden><path d="M0 2a2 2 0 0 1 2-2h8l3 4h15a2 2 0 0 1 2 2v22H0z" fill="#f3b62f" /><path d="M0 5h12l2 3h16v18a2 2 0 0 1-2 2H2a2 2 0 0 1-2-2z" fill="#f7c23e" /><path d="M5 22a2 2 0 0 1 2-2h16a2 2 0 0 1 2 2v6H5z" fill="#1967c0" /></svg>
        </AppButton>
        <AppButton label="Microsoft Store">
          <svg width="29" height="30" viewBox="0 0 29 30" aria-hidden><path d="M8 7V3a1 1 0 0 1 1-1h12a1 1 0 0 1 1 1v4" fill="none" stroke="#3ba8ea" strokeWidth="2" /><path d="M0 6h29v20a4 4 0 0 1-4 4H4a4 4 0 0 1-4-4z" fill="#f1f1f1" /><path d="M9 13h5v5H9z" fill="#d9472f" /><path d="M15 13h5v5h-5z" fill="#6aa52a" /><path d="M9 19h5v5H9z" fill="#1b8bdc" /><path d="M15 19h5v5h-5z" fill="#efb126" /></svg>
        </AppButton>
        <AppButton label="Outlook">
          <svg width="30" height="29" viewBox="0 0 30 29" aria-hidden><path d="M15 0l14 8v16a4 4 0 0 1-4 4H6a4 4 0 0 1-4-4V9z" fill="#2f9af0" /><path d="M15 0l12 7-18 12-7-4V9z" fill="#55bdf7" /><path d="M27 6l2 2v5L11 23l-6-5z" fill="#4340c4" /><path d="M29 13v11a4 4 0 0 1-4 4H12z" fill="#8fb8f5" /><rect y="13" width="12" height="12" rx="3" fill="#1452b5" /><circle cx="6" cy="19" r="2.800" fill="none" stroke="#fff" strokeWidth="1.600" /></svg>
        </AppButton>
        <AppButton label="Chrome">
          <svg width="30" height="30" viewBox="0 0 30 30" aria-hidden><circle cx="15" cy="15" r="15" fill="#f7c331" /><path d="M2 7.500A15 15 0 0 1 28 7.500H15L8.500 18.800z" fill="#db4437" /><path d="M2 7.500l6.500 11.300L15 22.500 15 30A15 15 0 0 1 2 7.500z" fill="#239a52" /><path d="M15 30l6.500-11.200L15 22.500l-4-1z" fill="#239a52" /><circle cx="15" cy="15" r="7.200" fill="#fff" /><circle cx="15" cy="15" r="5.700" fill="#2379e8" /></svg>
        </AppButton>
        <AppButton label="Notepad" dot>
          <svg width="23" height="30" viewBox="0 0 23 30" aria-hidden><rect y="2" width="23" height="26" rx="2" fill="#58b9dd" /><path d="M0 26h23v2a2 2 0 0 1-2 2H2a2 2 0 0 1-2-2z" fill="#8a4a18" /><path d="M0 25h23v2H0z" fill="#eee" /><path d="M3 0v4M8.500 0v4M14 0v4M19.500 0v4" stroke="#1b6e96" strokeWidth="2" /><path d="M4 9.500h15M7 14.500h12M4 19.500h10" stroke="#14516e" strokeWidth="1.800" /></svg>
        </AppButton>
        <AppButton label="WhatsApp">
          <svg width="30" height="30" viewBox="0 0 30 30" aria-hidden><rect width="30" height="30" rx="3" fill="#12d65c" /><path d="M5.500 25l1.500-5a9 9 0 1 1 3.500 3.500z" fill="none" stroke="#fff" strokeWidth="2" /><path d="M11 11c1-2 2-1 2.500.500.500 1-1 1.500 0 2.500s2 2 3 2 1-1.500 2-1c2 1 2 1.500 1 3-3 2-9-2-8.500-7z" fill="#fff" /></svg>
          <span className="absolute top-[8px] left-[29px] grid size-[20px] place-items-center rounded-full bg-[#4cc2ff] text-[13px] text-black">7</span>
        </AppButton>
        <button aria-label="Word" className="relative ml-[2px] grid size-[50px] place-items-center rounded-[5px] border border-white/5 bg-white/8">
          <WordLogo size={28} />
          <span className="absolute bottom-[1px] h-[4px] w-[20px] rounded-full bg-[#4cc2ff]" />
        </button>
      </div>
      <div className="flex flex-1 items-center justify-end pr-[24px]">
        <button aria-label="Show hidden icons"><svg width="15" height="9" viewBox="0 0 15 9" fill="none" stroke="#fff" strokeWidth="2" aria-hidden><path d="M1 8l6.500-6.500L14 8" /></svg></button>
        <button aria-label="Bluetooth" className="ml-[25px]">
          <svg width="15" height="20" viewBox="0 0 15 20" aria-hidden><rect width="15" height="20" rx="7" fill="#1b84e0" /><path d="M4 7l7 6-3.500 3V4L11 7l-7 6" fill="none" stroke="#fff" strokeWidth="1.200" /></svg>
        </button>
        <button className="ml-[24px] text-center text-[15px] leading-[20px]"><span className="block">ENG</span><span className="block">INTL</span></button>
        <button aria-label="Network, volume and battery" className="ml-[22px] flex items-center gap-[10px]">
          <svg width="20" height="16" viewBox="0 0 20 16" fill="none" stroke="#6c7579" strokeWidth="1.500" aria-hidden><path d="M1 6.500C6 0 14 0 19 6.500M4 9c3.500-4.500 8.500-4.500 12 0M6.500 11.500c2-2.500 5-2.500 7 0" /><circle cx="10" cy="13.500" r="2" fill="#fff" stroke="none" /></svg>
          <svg width="20" height="16" viewBox="0 0 20 16" fill="none" stroke="#fff" strokeWidth="1.500" aria-hidden><path d="M1 5.500h3L8 1.500v13L4 10.500H1zM10.500 5c1.500 2 1.500 4 0 6M13 3c3 3 3 7 0 10" /><path d="M16 1c4 4 4 10 0 14" stroke="#6c7579" /></svg>
          <svg width="25" height="17" viewBox="0 0 25 17" fill="none" stroke="#fff" strokeWidth="1.500" aria-hidden><rect x="1" y="4" width="20" height="12" rx="4" /><path d="M23.500 8v4" strokeWidth="2" /><rect x="3" y="6" width="12" height="8" rx="2" fill="#b5b8b0" stroke="none" /><path d="M12 0L8 8h3l-1 5 5-7h-3z" fill="#fff" stroke="none" /></svg>
        </button>
        <time className="ml-[20px] text-right text-[15px] leading-[20px]"><span className="block">21:51</span><span className="block">19/08/2026</span></time>
      </div>
      <span lang="ar" dir="rtl" className="pointer-events-none absolute -top-[22px] left-[838px] font-['DejaVu_Sans'] text-[50px] leading-[70px] font-bold whitespace-nowrap text-[#bfbfbf]/45">خـمـسـات</span>
    </div>
  );
}

export default function App() {
  return (
    <div className="flex h-screen flex-col overflow-hidden bg-[linear-gradient(90deg,#e1e7ea_0%,#e4eef0_35%,#e1e8eb_60%,#e1e7eb_100%)] font-['Open_Sans','Liberation_Sans']">
      <TitleBar />
      <Menu />
      <InfoBars />
      <main className="flex min-h-0 flex-1">
        <div dir="ltr" className="flex min-w-0 flex-1 justify-center gap-[13px] overflow-hidden border-b border-white">
          <Page><Grid head={philosophyHead} cells={[philosophyEgypt, philosophyUsa, philosophyGermany]} widths={mainCols} height="h-[660px]" /></Page>
          <Page><Grid head={goalsHead} cells={[goalsEgypt, goalsUsa, goalsGermany]} widths={mainCols} height="h-[691px]" /></Page>
          <Page>
            <Grid head={policyHead} cells={[policyEgypt, policyUsa, policyGermany]} widths={mainCols} height="h-[506px]" />
            <div className="mt-[4px]">
              <Grid head={rolesHead} cells={[rolesEgypt, rolesUsa, rolesGermany]} widths={roleCols} height="h-[187px]" />
            </div>
          </Page>
        </div>
        <div className="flex w-[21px] shrink-0 flex-col items-center rounded-full bg-[#f2f2f2] py-[6px]">
          <svg width="12" height="10" viewBox="0 0 12 10" fill="#6b6b6b" aria-hidden><path d="M6 0l6 9.500H0z" /></svg>
          <div className="mt-[138px] h-[123px] w-[10px] rounded-full bg-[#6f7173]" />
          <svg className="mt-auto" width="12" height="10" viewBox="0 0 12 10" fill="#6b6b6b" aria-hidden><path d="M6 9.500L12 0H0z" /></svg>
        </div>
      </main>
      <StatusBar />
      <Taskbar />
    </div>
  );
}
